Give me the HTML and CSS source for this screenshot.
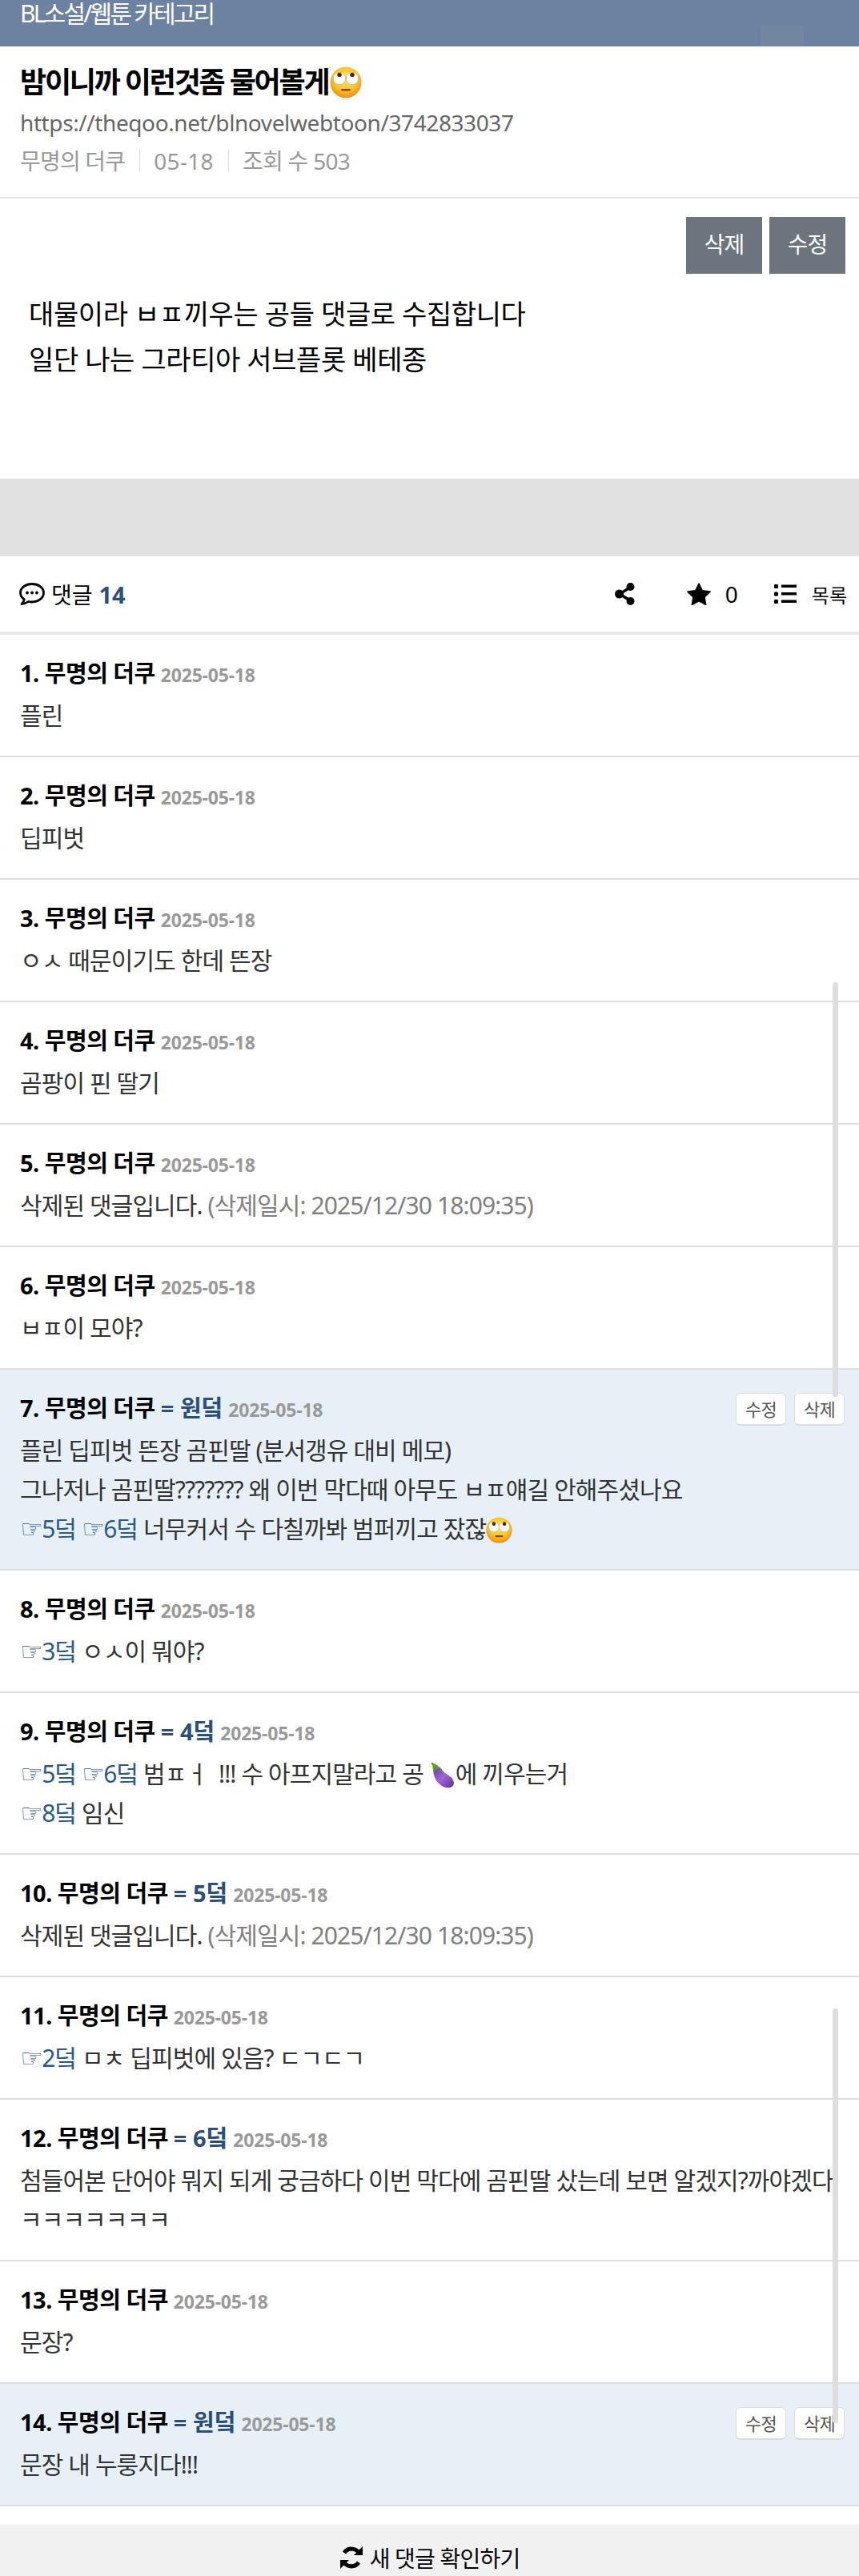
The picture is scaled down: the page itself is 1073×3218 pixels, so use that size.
FILE: index.html
```html
<!DOCTYPE html>
<html lang="ko">
<head>
    <meta charset="utf-8">
    <title>밤이니까 이런것좀 물어볼게</title>
    <link rel="stylesheet" href="styles.css">
</head>
<body>
    <svg class="defs" width="0" height="0">
        <defs>
            <radialGradient id="faceFill" cx="50%" cy="38%" r="62%">
                <stop offset="0" stop-color="#ffe46e"/>
                <stop offset="0.6" stop-color="#fcc52f"/>
                <stop offset="1" stop-color="#ee8c12"/>
            </radialGradient>
            <linearGradient id="plantFill" x1="0" y1="0" x2="1" y2="1">
                <stop offset="0" stop-color="#6a3a9c"/>
                <stop offset="0.5" stop-color="#a065d6"/>
                <stop offset="1" stop-color="#5d2e8e"/>
            </linearGradient>
        </defs>
        <symbol id="rolleyes" viewBox="0 0 40 40">
            <circle cx="20" cy="20" r="19.500" fill="url(#faceFill)"/>
            <circle cx="12" cy="15" r="7.800" fill="#fff" stroke="#d8a03c" stroke-width=".6"/>
            <circle cx="28" cy="15" r="7.800" fill="#fff" stroke="#d8a03c" stroke-width=".6"/>
            <circle cx="12" cy="10.500" r="2.800" fill="#4a2a18"/>
            <circle cx="28" cy="10.500" r="2.800" fill="#4a2a18"/>
            <rect x="14" y="28" width="12" height="2.600" rx="1.300" fill="#8a4a10"/>
        </symbol>
    </svg>

    <div class="cate">BL소설/웹툰 카테고리<span class="cate-ghost"></span></div>

    <div class="head">
        <h1 class="title">밤이니까 이런것좀 물어볼게<svg class="emoji emoji-lg"><use href="#rolleyes"/></svg></h1>
        <div class="url">https://theqoo.net/blnovelwebtoon/3742833037</div>
        <div class="meta"><span>무명의 더쿠</span><span class="meta-date">05-18</span><span class="meta-hit">조회 수 503</span></div>
    </div>

    <div class="article">
        <div class="article-btns">
            <a class="btn-dark">삭제</a>
            <a class="btn-dark">수정</a>
        </div>
        <p>대물이라 ㅂㅍ끼우는 공들 댓글로 수집합니다</p>
        <p>일단 나는 그라티아 서브플롯 베테종</p>
    </div>

    <div class="ad-gap"></div>

    <div class="cmt-bar">
        <div class="cmt-count">
            <svg class="ico" viewBox="0 0 32 28" width="32" height="28"><path d="M16 1.500C8 1.500 1.500 6.300 1.500 12.500c0 3.300 1.900 6.200 4.800 8.200-.3 1.900-1.300 3.800-3.300 5.800 3.400-.3 6.400-1.500 8.400-3 1.400.3 3 .5 4.600.5 8 0 14.500-4.900 14.500-11.500S24 1.500 16 1.500z" fill="none" stroke="#000" stroke-width="2.800" stroke-linejoin="round"/><circle cx="10" cy="12.500" r="1.900"/><circle cx="16" cy="12.500" r="1.900"/><circle cx="22" cy="12.500" r="1.900"/></svg>
            댓글 <b>14</b>
        </div>
        <div class="cmt-tools">
            <svg class="ico tool-share" viewBox="0 0 25 28" width="25" height="28"><path d="M19.500 5.500 6 14l13.500 8.500" fill="none" stroke="#000" stroke-width="3.500"/><circle cx="19.500" cy="5" r="5"/><circle cx="5.500" cy="14" r="5.500"/><circle cx="19.500" cy="23" r="5"/></svg>
            <svg class="ico tool-star" viewBox="0 0 30 28" width="30" height="28"><path d="M15 1l4.300 8.800 9.700 1.300-7 6.800 1.700 9.600-8.700-4.600-8.700 4.600L8 17.900l-7-6.800 9.700-1.300z" stroke="#000" stroke-width="1.500" stroke-linejoin="round"/></svg>
            <span class="tool-num">0</span>
            <svg class="ico tool-list" viewBox="0 0 28 26" width="28" height="26"><rect x="0" y="1" width="5" height="5" rx="1"/><rect x="0" y="10.500" width="5" height="5" rx="1"/><rect x="0" y="20" width="5" height="5" rx="1"/><rect x="9" y="1.500" width="19" height="3.500"/><rect x="9" y="11" width="19" height="3.500"/><rect x="9" y="20.500" width="19" height="3.500"/></svg>
            <span class="tool-txt">목록</span>
        </div>
    </div>

    <ul class="cmt-list">
        <li class="cmt">
            <div class="cmt-head"><b>1. 무명의 더쿠</b> <span class="date">2025-05-18</span></div>
            <div class="cmt-body">플린</div>
        </li>
        <li class="cmt">
            <div class="cmt-head"><b>2. 무명의 더쿠</b> <span class="date">2025-05-18</span></div>
            <div class="cmt-body">딥피벗</div>
        </li>
        <li class="cmt">
            <div class="cmt-head"><b>3. 무명의 더쿠</b> <span class="date">2025-05-18</span></div>
            <div class="cmt-body">ㅇㅅ 때문이기도 한데 뜬장</div>
        </li>
        <li class="cmt">
            <div class="cmt-head"><b>4. 무명의 더쿠</b> <span class="date">2025-05-18</span></div>
            <div class="cmt-body">곰팡이 핀 딸기</div>
        </li>
        <li class="cmt">
            <div class="cmt-head"><b>5. 무명의 더쿠</b> <span class="date">2025-05-18</span></div>
            <div class="cmt-body">삭제된 댓글입니다. <span class="deleted">(삭제일시: 2025/12/30 18:09:35)</span></div>
        </li>
        <li class="cmt">
            <div class="cmt-head"><b>6. 무명의 더쿠</b> <span class="date">2025-05-18</span></div>
            <div class="cmt-body">ㅂㅍ이 모야?</div>
        </li>
        <li class="cmt mine">
            <div class="cmt-head"><b>7. 무명의 더쿠</b> <span class="reply">= <b>원덬</b></span> <span class="date">2025-05-18</span></div>
            <div class="cmt-btns"><a class="btn-sm">수정</a><a class="btn-sm">삭제</a></div>
            <div class="cmt-body">플린 딥피벗 뜬장 곰핀딸 (분서갱유 대비 메모)<br>그나저나 곰핀딸??????? 왜 이번 막다때 아무도 ㅂㅍ얘길 안해주셨나요<br><a class="ref"><i>☞</i>5덬</a> <a class="ref"><i>☞</i>6덬</a> 너무커서 수 다칠까봐 범퍼끼고 잤잖<svg class="emoji"><use href="#rolleyes"/></svg></div>
        </li>
        <li class="cmt">
            <div class="cmt-head"><b>8. 무명의 더쿠</b> <span class="date">2025-05-18</span></div>
            <div class="cmt-body"><a class="ref"><i>☞</i>3덬</a> ㅇㅅ이 뭐야?</div>
        </li>
        <li class="cmt">
            <div class="cmt-head"><b>9. 무명의 더쿠</b> <span class="reply">= <b>4덬</b></span> <span class="date">2025-05-18</span></div>
            <div class="cmt-body"><a class="ref"><i>☞</i>5덬</a> <a class="ref"><i>☞</i>6덬</a> 범ㅍㅓ&nbsp; !!! 수 아프지말라고 공 <svg class="emoji" viewBox="0 0 36 36"><path d="M7 8C10 5 15 6 17 10c3 5 8 7 13 11 4 4 5 9 2 12-3 3-9 3-14 0C11 29 7 22 6 15 5.500 12 5.500 10 7 8z" fill="url(#plantFill)"/><path d="M3 1c1.500-.8 3 0 3.500 1.500 3 .5 6.500 3 8.500 7-2-1-4-.5-5 .5-.5 1.500-2 2.500-3.500 4-1-2-2-6-1.500-9C4 4 3 2.500 3 1z" fill="#5c9a2a"/></svg>에 끼우는거<br><a class="ref"><i>☞</i>8덬</a> 임신</div>
        </li>
        <li class="cmt">
            <div class="cmt-head"><b>10. 무명의 더쿠</b> <span class="reply">= <b>5덬</b></span> <span class="date">2025-05-18</span></div>
            <div class="cmt-body">삭제된 댓글입니다. <span class="deleted">(삭제일시: 2025/12/30 18:09:35)</span></div>
        </li>
        <li class="cmt">
            <div class="cmt-head"><b>11. 무명의 더쿠</b> <span class="date">2025-05-18</span></div>
            <div class="cmt-body"><a class="ref"><i>☞</i>2덬</a> ㅁㅊ 딥피벗에 있음? ㄷㄱㄷㄱ</div>
        </li>
        <li class="cmt">
            <div class="cmt-head"><b>12. 무명의 더쿠</b> <span class="reply">= <b>6덬</b></span> <span class="date">2025-05-18</span></div>
            <div class="cmt-body">첨들어본 단어야 뭐지 되게 궁금하다 이번 막다에 곰핀딸 샀는데 보면 알겠지?까야겠다<br>ㅋㅋㅋㅋㅋㅋㅋ</div>
        </li>
        <li class="cmt">
            <div class="cmt-head"><b>13. 무명의 더쿠</b> <span class="date">2025-05-18</span></div>
            <div class="cmt-body">문장?</div>
        </li>
        <li class="cmt mine">
            <div class="cmt-head"><b>14. 무명의 더쿠</b> <span class="reply">= <b>원덬</b></span> <span class="date">2025-05-18</span></div>
            <div class="cmt-btns"><a class="btn-sm">수정</a><a class="btn-sm">삭제</a></div>
            <div class="cmt-body">문장 내 누룽지다!!!</div>
        </li>
    </ul>

    <div class="more">
        <svg class="ico" viewBox="0 0 30 30" width="30" height="30"><path d="M25.500 11.500A11 11 0 0 0 6 9" fill="none" stroke="#000" stroke-width="5"/><path d="M29 1v11H18z"/><path d="M4.500 18.500A11 11 0 0 0 24 21" fill="none" stroke="#000" stroke-width="5"/><path d="M1 29V18h11z"/></svg>
        새 댓글 확인하기
    </div>

    <div class="scroll scroll-a"></div>
    <div class="scroll scroll-b"></div>
</body>
</html>
```

FILE: styles.css
```css
* {
    box-sizing: border-box;
}
html, body {
    margin: 0;
    padding: 0;
}
body {
    position: relative;
    height: 3218px;
    overflow: hidden;
    background: #fff;
    color: #000;
    font-family: "Noto Sans", "Noto Sans CJK KR", sans-serif;
    font-size: 28px;
}
.defs {
    position: absolute;
}
a {
    color: inherit;
    text-decoration: none;
}
.cate {
    height: 58px;
    padding: 0 25px;
    background: #6d82a0;
    color: #fff;
    font-size: 30px;
    line-height: 34px;
    letter-spacing: -2.800px;
    position: relative;
}
.cate-ghost {
    position: absolute;
    left: 950px;
    top: 32px;
    width: 54px;
    height: 26px;
    background: #72879f;
}
.head {
    padding: 20px 25px 0;
    height: 190px;
    border-bottom: 2px solid #e3e3e3;
}
.title {
    margin: 0;
    font-size: 36px;
    line-height: 50px;
    font-weight: 700;
    letter-spacing: -2.200px;
    display: flex;
    align-items: center;
}
.emoji {
    display: inline-block;
    width: 33px;
    height: 33px;
    vertical-align: -7px;
}
.emoji-lg {
    width: 40px;
    height: 40px;
    margin-left: 2px;
}
.url {
    margin-top: 5px;
    font-size: 28px;
    line-height: 40px;
    color: #666;
    letter-spacing: -0.400px;
}
.meta {
    margin-top: 8px;
    font-size: 28px;
    line-height: 40px;
    color: #999;
    letter-spacing: -0.800px;
    display: flex;
}
.meta span + span {
    margin-left: 18px;
    padding-left: 18px;
    position: relative;
}
.meta span + span::before {
    content: "";
    position: absolute;
    left: 0;
    top: 6px;
    width: 1px;
    height: 28px;
    background: #ddd;
}
.meta .meta-date {
    letter-spacing: 0.300px;
}
.meta .meta-hit {
    letter-spacing: -0.700px;
}
.article {
    height: 350px;
    padding: 23px 36px 0;
}
.article-btns {
    display: flex;
    justify-content: flex-end;
    gap: 9px;
    margin: 0 -19px 22px 0;
}
.btn-dark {
    width: 95px;
    height: 71px;
    background: #6c757d;
    color: #fff;
    font-size: 28px;
    line-height: 68px;
    text-align: center;
    letter-spacing: -1px;
}
.article p {
    margin: 0;
    font-size: 34px;
    line-height: 57px;
    letter-spacing: -0.400px;
}
.ad-gap {
    height: 97px;
    background: #e1e1e1;
}
.cmt-bar {
    height: 98px;
    padding: 0 15px 0 24px;
    display: flex;
    align-items: center;
    justify-content: space-between;
    border-bottom: 4px solid #e8e8e8;
    font-size: 28px;
}
.cmt-count {
    display: flex;
    align-items: center;
    gap: 8px;
}
.cmt-count b {
    font-size: 29px;
    color: #2b4f76;
}
.cmt-tools {
    display: flex;
    align-items: center;
}
.tool-share {
    margin-right: 65px;
}
.tool-star {
    margin-right: 18px;
}
.tool-num {
    margin-right: 45px;
}
.tool-list {
    margin-right: 19px;
}
.tool-txt {
    font-size: 24px;
}
.cmt-list {
    list-style: none;
    margin: 0;
    padding: 0;
}
.cmt {
    position: relative;
    padding: 28px 25px 26px;
    border-bottom: 2px solid #dedede;
}
.cmt.mine {
    background: #e7f0f6;
}
.cmt-head {
    font-size: 29px;
    line-height: 40px;
    letter-spacing: -0.500px;
}
.cmt-head b {
    font-weight: 700;
}
.date {
    font-size: 23px;
    line-height: 1;
    font-weight: 700;
    color: #999;
    letter-spacing: -0.200px;
}
.reply {
    color: #2b4f76;
    font-weight: 700;
    letter-spacing: 0;
}
.cmt-body {
    margin-top: 8px;
    font-size: 30px;
    line-height: 49px;
    color: #333;
    letter-spacing: -0.900px;
}
.deleted {
    color: #808080;
}
.ref {
    color: #2b5a8a;
}
.ref i {
    font-family: "DejaVu Sans", sans-serif;
    font-size: 32px;
    line-height: 1;
    font-style: normal;
    letter-spacing: -1.500px;
}
.cmt-btns {
    position: absolute;
    right: 18px;
    top: 29px;
    display: flex;
    gap: 10px;
}
.btn-sm {
    width: 63px;
    height: 41px;
    background: #fff;
    border: 1px solid #ddd;
    border-bottom-width: 2px;
    border-radius: 6px;
    color: #555;
    font-size: 22px;
    line-height: 38px;
    text-align: center;
    letter-spacing: -0.800px;
}
.more {
    margin-top: 23px;
    height: 64px;
    padding-top: 18px;
    background: #f1f1f1;
    display: flex;
    align-items: center;
    justify-content: center;
    gap: 8px;
    font-size: 28px;
    letter-spacing: -0.800px;
}
.scroll {
    position: absolute;
    right: 26px;
    width: 7px;
    border-radius: 3px;
    background: #dedede;
}
.scroll-a {
    top: 1227px;
    height: 518px;
}
.scroll-b {
    top: 2509px;
    height: 518px;
}
```
